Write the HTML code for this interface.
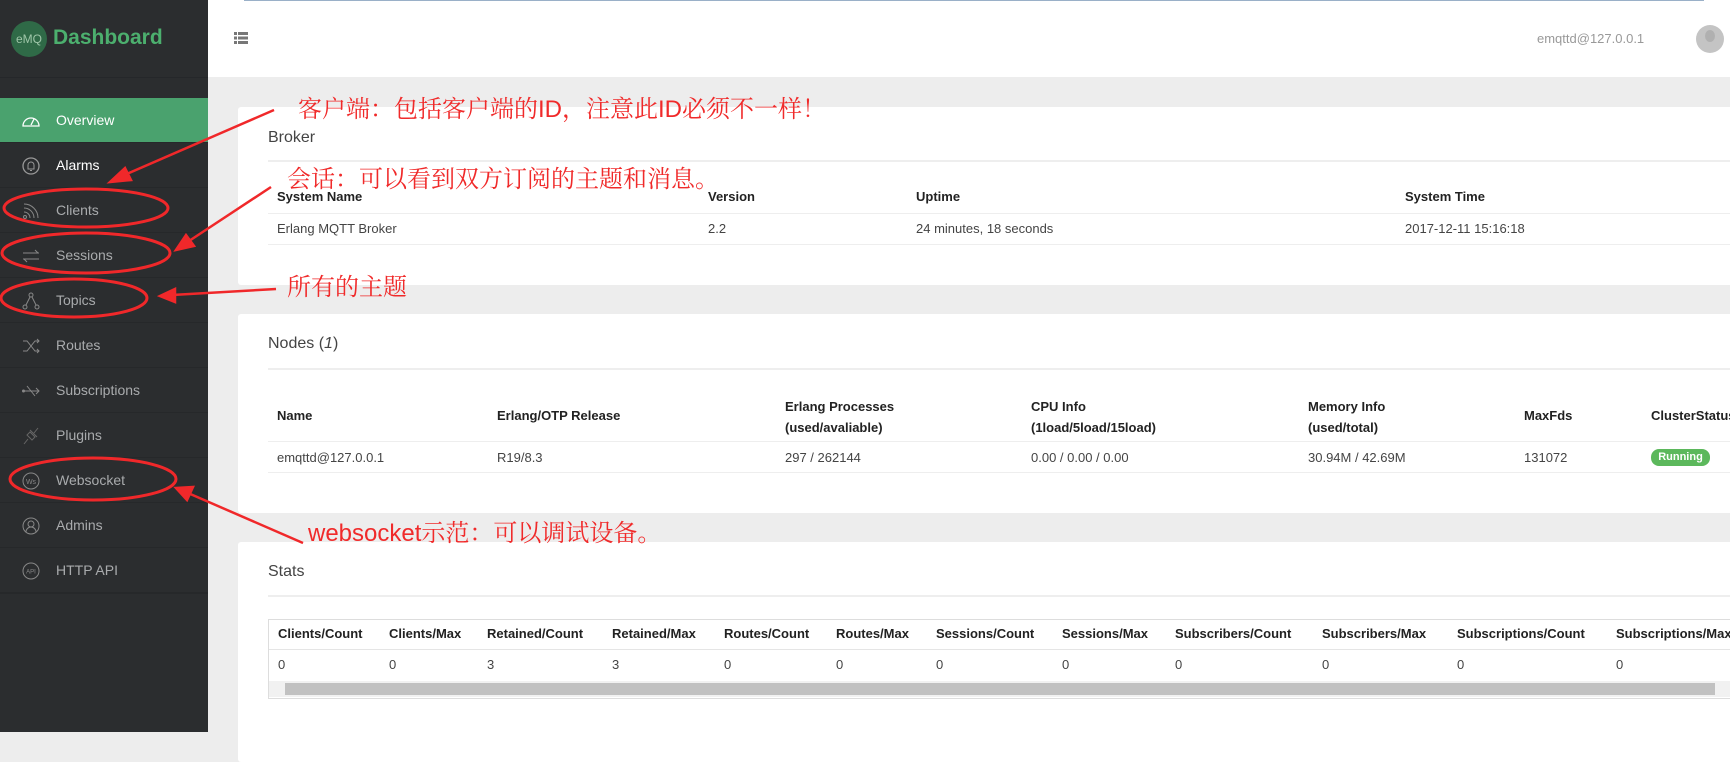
<!DOCTYPE html>
<html><head><meta charset="utf-8"><style>
*{margin:0;padding:0;box-sizing:border-box}
body{width:1730px;height:732px;overflow:hidden;background:#ededed;font-family:"Liberation Sans","Noto Sans CJK SC",sans-serif;position:relative;color:#333}
.abs{position:absolute}
#side{left:0;top:0;width:208px;height:732px;background:#2b2d2f}
.item{position:absolute;left:0;width:208px;height:45px;border-bottom:1px solid #26282a;color:#a9abad;font-size:14px;line-height:45px;padding-left:56px}
.item svg{position:absolute;left:21px;top:13px}
.card{position:absolute;left:238px;width:1520px;background:#fff;border-radius:3px}
.t{position:absolute;font-size:13px;white-space:nowrap}
.b{font-weight:bold;color:#222}
.line{position:absolute;height:2px;background:#eeeeee}
.red{position:absolute;color:#f02a2a;font-size:24px;white-space:nowrap;font-family:"Liberation Sans","Noto Serif CJK SC",serif}
</style></head><body>
<div id="side" class="abs">
 <div class="abs" style="left:11px;top:21px;width:36px;height:36px;border-radius:50%;background:#2f6a47;color:#9fc6a9;font-size:12px;line-height:36px;text-align:center">eMQ</div>
 <div class="abs" style="left:53px;top:26px;font-size:21px;font-weight:bold;color:#4caf6e">Dashboard</div>
 <div class="abs" style="left:0;top:77px;width:208px;height:1px;background:#25272a"></div>
 <div class="item" style="top:98px;background:#4aa26e;color:#fff"><svg width="20" height="18" viewBox="0 0 20 18"><path d="M2 15 A8 8 0 1 1 18 15 Z" fill="none" stroke="#fff" stroke-width="1.3"/><path d="M10 14 L13 8" stroke="#fff" stroke-width="1.3"/></svg>Overview</div>
 <div class="item" style="top:143px;color:#fff"><svg width="20" height="20" viewBox="0 0 20 20"><circle cx="10" cy="10" r="8" fill="none" stroke="#999" stroke-width="1.3"/><path d="M7 13 L7 9 A3 3 0 0 1 13 9 L13 13 Z M9 14.5h2" fill="none" stroke="#999"/></svg>Alarms</div>
 <div class="item" style="top:188px"><svg width="20" height="20" viewBox="0 0 20 20"><circle cx="4" cy="16" r="1.5" fill="none" stroke="#888"/><path d="M3 11a6 6 0 0 1 6 6M3 7a10 10 0 0 1 10 10M3 3a14 14 0 0 1 14 14" fill="none" stroke="#888"/></svg>Clients</div>
 <div class="item" style="top:233px"><svg width="20" height="20" viewBox="0 0 20 20"><path d="M2 7h16M14 4l3 3M18 13H2M6 16l-3-3" fill="none" stroke="#888"/></svg>Sessions</div>
 <div class="item" style="top:278px"><svg width="20" height="20" viewBox="0 0 20 20"><path d="M10 4L4 16M10 4l6 12" fill="none" stroke="#888"/><circle cx="10" cy="4" r="2" fill="#2b2d2f" stroke="#888"/><circle cx="4" cy="16" r="2" fill="#2b2d2f" stroke="#888"/><circle cx="16" cy="16" r="2" fill="#2b2d2f" stroke="#888"/></svg>Topics</div>
 <div class="item" style="top:323px"><svg width="20" height="20" viewBox="0 0 20 20"><path d="M2 5h4l8 10h4M2 15h4l8-10h4M16 3l2 2-2 2M16 13l2 2-2 2" fill="none" stroke="#888"/></svg>Routes</div>
 <div class="item" style="top:368px"><svg width="20" height="20" viewBox="0 0 20 20"><path d="M2 10h16M10 10l-4-5M10 10l4 5M15 7l3 3-3 3" fill="none" stroke="#888"/><circle cx="2.5" cy="10" r="1.5" fill="#888"/></svg>Subscriptions</div>
 <div class="item" style="top:413px"><svg width="20" height="20" viewBox="0 0 20 20"><path d="M3 18l4-5M13 7l4-5M6 9l5 5 3-3-5-5z M9 4l7 7" fill="none" stroke="#666"/></svg>Plugins</div>
 <div class="item" style="top:458px"><svg width="20" height="20" viewBox="0 0 20 20"><circle cx="10" cy="10" r="8" fill="none" stroke="#888"/><text x="10" y="13" font-size="7" fill="#888" text-anchor="middle" font-family="Liberation Sans">Ws</text></svg>Websocket</div>
 <div class="item" style="top:503px"><svg width="20" height="20" viewBox="0 0 20 20"><circle cx="10" cy="10" r="8" fill="none" stroke="#888"/><circle cx="10" cy="8" r="3" fill="none" stroke="#888"/><path d="M5 16a5 5 0 0 1 10 0" fill="none" stroke="#888"/></svg>Admins</div>
 <div class="item" style="top:548px"><svg width="20" height="20" viewBox="0 0 20 20"><circle cx="10" cy="10" r="8" fill="none" stroke="#888"/><text x="10" y="12.5" font-size="6" fill="#888" text-anchor="middle" font-family="Liberation Sans">API</text></svg>HTTP API</div>
 <div class="abs" style="left:0;top:593px;width:208px;height:1px;background:#26282a"></div>
</div>
<div class="abs" style="left:208px;top:0;width:1522px;height:77px;background:#fff"></div>
<div class="abs" style="left:244px;top:0;width:1460px;height:1px;background:#9ab0c8"></div>
<svg class="abs" style="left:233px;top:31px" width="16" height="14" viewBox="0 0 16 14"><path d="M1 1h3v3H1zM5 1h10v3H5zM1 5.5h3v3H1zM5 5.5h10v3H5zM1 10h3v3H1zM5 10h10v3H5z" fill="#777"/></svg>
<div class="t" style="left:1537px;top:31px;font-size:13px;color:#999">emqttd@127.0.0.1</div>
<div class="abs" style="left:1696px;top:25px;width:28px;height:28px;border-radius:50%;background:#c4c4c4;overflow:hidden"><div class="abs" style="left:9px;top:5px;width:10px;height:12px;border-radius:50%;background:#b0b0b0"></div></div>

<div class="card" style="top:107px;height:178px">
 <div class="t" style="left:30px;top:22px;font-size:16px;color:#444">Broker</div>
 <div class="line" style="left:30px;top:53px;width:1500px"></div>
 <div class="t b" style="left:39px;top:82px">System Name</div><div class="t b" style="left:470px;top:82px">Version</div><div class="t b" style="left:678px;top:82px">Uptime</div><div class="t b" style="left:1167px;top:82px">System Time</div>
 <div class="line" style="left:30px;top:106px;width:1500px;height:1px"></div>
 <div class="t" style="left:39px;top:114px;color:#444">Erlang MQTT Broker</div><div class="t" style="left:470px;top:114px;color:#444">2.2</div><div class="t" style="left:678px;top:114px;color:#444">24 minutes, 18 seconds</div><div class="t" style="left:1167px;top:114px;color:#444">2017-12-11 15:16:18</div>
 <div class="line" style="left:30px;top:137px;width:1500px;height:1px"></div>
</div>

<div class="card" style="top:314px;height:199px">
 <div class="t" style="left:30px;top:21px;font-size:16px;color:#444">Nodes (<i>1</i>)</div>
 <div class="line" style="left:30px;top:54px;width:1500px"></div>
 <div class="t b" style="left:39px;top:94px">Name</div><div class="t b" style="left:259px;top:94px">Erlang/OTP Release</div>
 <div class="t b" style="left:547px;top:82px;line-height:21px">Erlang Processes<br>(used/avaliable)</div>
 <div class="t b" style="left:793px;top:82px;line-height:21px">CPU Info<br>(1load/5load/15load)</div>
 <div class="t b" style="left:1070px;top:82px;line-height:21px">Memory Info<br>(used/total)</div>
 <div class="t b" style="left:1286px;top:94px">MaxFds</div><div class="t b" style="left:1413px;top:94px">ClusterStatus</div>
 <div class="line" style="left:30px;top:127px;width:1500px;height:1px"></div>
 <div class="t" style="left:39px;top:136px;color:#444">emqttd@127.0.0.1</div><div class="t" style="left:259px;top:136px;color:#444">R19/8.3</div><div class="t" style="left:547px;top:136px;color:#444">297 / 262144</div><div class="t" style="left:793px;top:136px;color:#444">0.00 / 0.00 / 0.00</div><div class="t" style="left:1070px;top:136px;color:#444">30.94M / 42.69M</div><div class="t" style="left:1286px;top:136px;color:#444">131072</div>
 <div class="abs" style="left:1413px;top:135px;width:59px;height:17px;border-radius:8px;background:#5cb85c;color:#fff;font-size:11px;font-weight:bold;text-align:center;line-height:17px">Running</div>
 <div class="line" style="left:30px;top:158px;width:1500px;height:1px"></div>
</div>

<div class="card" style="top:542px;height:220px">
 <div class="t" style="left:30px;top:21px;font-size:16px;color:#444">Stats</div>
 <div class="line" style="left:30px;top:53px;width:1500px"></div>
 <div class="abs" style="left:30px;top:77px;width:1500px;height:80px;border:1px solid #ddd;border-right:none">
  <div class="t b" style="left:9px;top:6px">Clients/Count</div><div class="t b" style="left:120px;top:6px">Clients/Max</div><div class="t b" style="left:218px;top:6px">Retained/Count</div><div class="t b" style="left:343px;top:6px">Retained/Max</div><div class="t b" style="left:455px;top:6px">Routes/Count</div><div class="t b" style="left:567px;top:6px">Routes/Max</div><div class="t b" style="left:667px;top:6px">Sessions/Count</div><div class="t b" style="left:793px;top:6px">Sessions/Max</div><div class="t b" style="left:906px;top:6px">Subscribers/Count</div><div class="t b" style="left:1053px;top:6px">Subscribers/Max</div><div class="t b" style="left:1188px;top:6px">Subscriptions/Count</div><div class="t b" style="left:1347px;top:6px">Subscriptions/Max</div>
  <div class="abs" style="left:0;top:29px;width:1500px;height:1px;background:#e5e5e5"></div>
  <div class="t" style="left:9px;top:37px;color:#444">0</div><div class="t" style="left:120px;top:37px;color:#444">0</div><div class="t" style="left:218px;top:37px;color:#444">3</div><div class="t" style="left:343px;top:37px;color:#444">3</div><div class="t" style="left:455px;top:37px;color:#444">0</div><div class="t" style="left:567px;top:37px;color:#444">0</div><div class="t" style="left:667px;top:37px;color:#444">0</div><div class="t" style="left:793px;top:37px;color:#444">0</div><div class="t" style="left:906px;top:37px;color:#444">0</div><div class="t" style="left:1053px;top:37px;color:#444">0</div><div class="t" style="left:1188px;top:37px;color:#444">0</div><div class="t" style="left:1347px;top:37px;color:#444">0</div>
  <div class="abs" style="left:0;top:61px;width:1500px;height:16px;background:#f1f1f1"></div>
  <div class="abs" style="left:16px;top:63px;width:1430px;height:12px;background:#c1c1c1"></div>
 </div>
</div>

<div class="red" style="left:298px;top:89px">客户端：包括客户端的ID，注意此ID必须不一样！</div>
<div class="red" style="left:287px;top:159px">会话：可以看到双方订阅的主题和消息。</div>
<div class="red" style="left:287px;top:267px">所有的主题</div>
<div class="red" style="left:308px;top:513px">websocket示范：可以调试设备。</div>
<svg class="abs" style="left:0;top:0" width="1730" height="732">
 <g fill="none" stroke="#f0282a" stroke-width="3">
  <ellipse cx="86" cy="208" rx="82" ry="19"/>
  <ellipse cx="86" cy="253" rx="84" ry="20"/>
  <ellipse cx="74" cy="298" rx="73" ry="19"/>
  <ellipse cx="93" cy="479" rx="83" ry="21"/>
 </g>
 <g stroke="#f0282a" stroke-width="2.5" fill="#f0282a">
  <line x1="274" y1="110" x2="122" y2="176"/><polygon points="110,182 125,168 131,180"/>
  <line x1="271" y1="187" x2="186" y2="243"/><polygon points="176,250 186,235 194,246"/>
  <line x1="276" y1="289" x2="172" y2="295"/><polygon points="160,296 175,289 175,302"/>
  <line x1="303" y1="543" x2="188" y2="493"/><polygon points="176,488 193,487 187,500"/>
 </g>
</svg>
</body></html>
